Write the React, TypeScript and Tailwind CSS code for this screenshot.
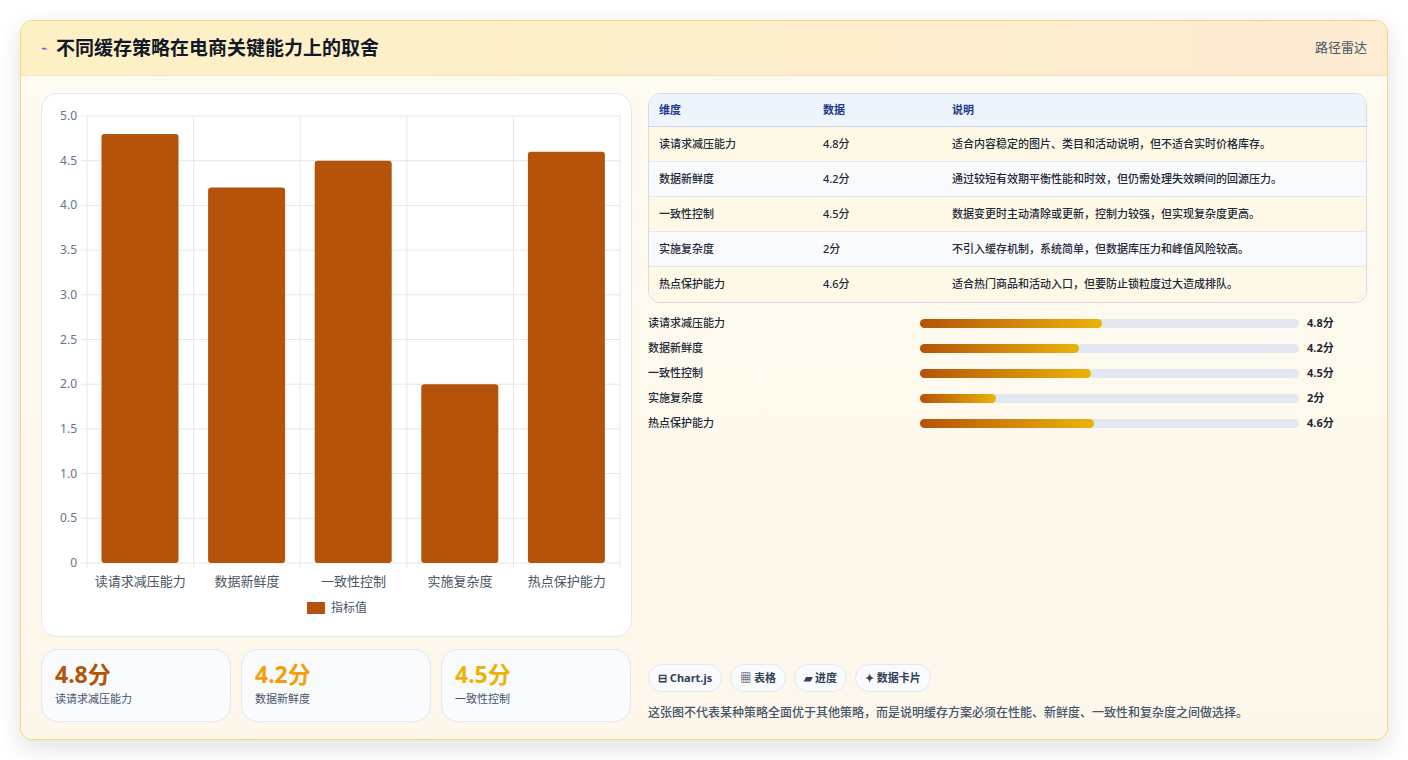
import React from "react";

const rows = [
  { name: "读请求减压能力", v: 4.8, d: "适合内容稳定的图片、类目和活动说明，但不适合实时价格库存。" },
  { name: "数据新鲜度", v: 4.2, d: "通过较短有效期平衡性能和时效，但仍需处理失效瞬间的回源压力。" },
  { name: "一致性控制", v: 4.5, d: "数据变更时主动清除或更新，控制力较强，但实现复杂度更高。" },
  { name: "实施复杂度", v: 2, d: "不引入缓存机制，系统简单，但数据库压力和峰值风险较高。" },
  { name: "热点保护能力", v: 4.6, d: "适合热门商品和活动入口，但要防止锁粒度过大造成排队。" },
];

const font = { fontFamily: '"Noto Sans","Noto Sans CJK SC",sans-serif' };

const Chart = () => {
  const x0 = 45, x1 = 578, yTop = 22, yBot = 469;
  const cw = (x1 - x0) / 5;
  const ticks = [0, 0.5, 1, 1.5, 2, 2.5, 3, 3.5, 4, 4.5, 5];
  const sy = (v: number) => yBot - (v / 5) * (yBot - yTop);
  return (
    <svg width="590" height="542" className="block">
      {ticks.map((t) => (
        <g key={t}>
          <line x1={x0 - 6} x2={x1} y1={sy(t)} y2={sy(t)} stroke="#e5e7eb" />
          <text x={x0 - 10} y={sy(t) + 4} textAnchor="end" fontSize="12" fill="#64748b">{t === 0 ? "0" : t.toFixed(1)}</text>
        </g>
      ))}
      {[0, 1, 2, 3, 4, 5].map((i) => (
        <line key={i} x1={x0 + i * cw} x2={x0 + i * cw} y1={yTop} y2={yBot + 6} stroke="#e5e7eb" />
      ))}
      {rows.map((r, i) => (
        <g key={r.name}>
          <rect x={x0 + i * cw + 14.5} y={sy(r.v)} width={77} height={yBot - sy(r.v)} rx="3" fill="#b45309" />
          <text x={x0 + i * cw + cw / 2} y={yBot + 23} textAnchor="middle" fontSize="13" fill="#4b5563">{r.name}</text>
        </g>
      ))}
      <rect x="265" y="508" width="18" height="12" fill="#b45309" />
      <text x="289" y="518" fontSize="12" fill="#4b5563">指标值</text>
    </svg>
  );
};

export default function App() {
  return (
    <div className="min-h-screen bg-white p-5" style={font}>
      <div className="h-[720px] rounded-xl border border-[#f5d77a] bg-[#fef8ec] shadow-[0_8px_24px_rgba(0,0,0,0.12)] overflow-hidden flex flex-col">
        <div className="h-[55px] shrink-0 flex items-center justify-between px-5 bg-gradient-to-r from-[#fdf0c4] to-[#fdebd2] border-b border-[#f3e3bd]">
          <div className="flex items-center gap-2">
            <span className="text-[11px] text-[#4f46e5]">⌁</span>
            <h1 className="text-[19px] font-bold text-[#111827]">不同缓存策略在电商关键能力上的取舍</h1>
          </div>
          <span className="text-[13px] text-[#4b5563]">路径雷达</span>
        </div>
        <div className="flex-1 flex gap-4 px-5 pt-[17px] pb-5 bg-gradient-to-b from-[#fffbf0] to-[#fdf6ea]">
          <div className="w-[591px] flex flex-col gap-3">
            <div className="h-[544px] rounded-2xl bg-white border border-[#e5e7eb]">
              <Chart />
            </div>
            <div className="flex gap-[10px]">
              {[["4.8分", "text-[#b45309]", "读请求减压能力"], ["4.2分", "text-[#f59e0b]", "数据新鲜度"], ["4.5分", "text-[#eab308]", "一致性控制"]].map(([v, c, l]) => (
                <div key={l} className="w-[190px] h-[73px] rounded-2xl bg-[#f8fafc] border border-[#e2e8f0] px-[13px] pt-[10px]">
                  <div className={`text-[23px] font-bold leading-7 ${c}`}>{v}</div>
                  <div className="text-[11px] text-[#475569] mt-[3px]">{l}</div>
                </div>
              ))}
            </div>
          </div>
          <div className="flex-1 flex flex-col">
            <div className="rounded-xl border border-[#d6dbe3] overflow-hidden text-[11px]">
              <div className="flex h-[33px] items-center bg-[#eef4fc] border-b border-[#cbd5e1] font-semibold text-[#1e3a8a]">
                <div className="w-[174px] pl-[10px]">维度</div>
                <div className="w-[129px]">数据</div>
                <div>说明</div>
              </div>
              {rows.map((r, i) => (
                <div key={r.name} className={`flex h-[35px] items-center font-medium text-[#1f2937] ${i % 2 ? "bg-[#f8fafc]" : "bg-[#fef9e7]"} ${i < 4 ? "border-b border-[#e2e8f0]" : ""}`}>
                  <div className="w-[174px] pl-[10px]">{r.name}</div>
                  <div className="w-[129px]">{r.v}分</div>
                  <div>{r.d}</div>
                </div>
              ))}
            </div>
            <div className="mt-[12px] flex flex-col gap-[8px]">
              {rows.map((r) => (
                <div key={r.name} className="flex items-center h-[17px] text-[11px] font-medium text-[#1f2937]">
                  <div className="w-[272px]">{r.name}</div>
                  <div className="w-[379px] h-[9px] rounded-full bg-[#e2e8f0]">
                    <div className="h-full rounded-full bg-gradient-to-r from-[#b45309] to-[#eab308]" style={{ width: `${(r.v / 10) * 100}%` }} />
                  </div>
                  <div className="ml-2 font-bold">{r.v}分</div>
                </div>
              ))}
            </div>
            <div className="flex-1" />
            <div className="flex gap-2 text-[11px] font-bold text-[#334155]">
              {["⊟ Chart.js", "▦ 表格", "▰ 进度", "✦ 数据卡片"].map((t) => (
                <span key={t} className="h-[28px] px-[9px] flex items-center rounded-full bg-[#f8fafc] border border-[#e2e8f0]">{t}</span>
              ))}
            </div>
            <p className="mt-[12px] text-[12px] font-medium text-[#475569]">这张图不代表某种策略全面优于其他策略，而是说明缓存方案必须在性能、新鲜度、一致性和复杂度之间做选择。</p>
          </div>
        </div>
      </div>
    </div>
  );
}
